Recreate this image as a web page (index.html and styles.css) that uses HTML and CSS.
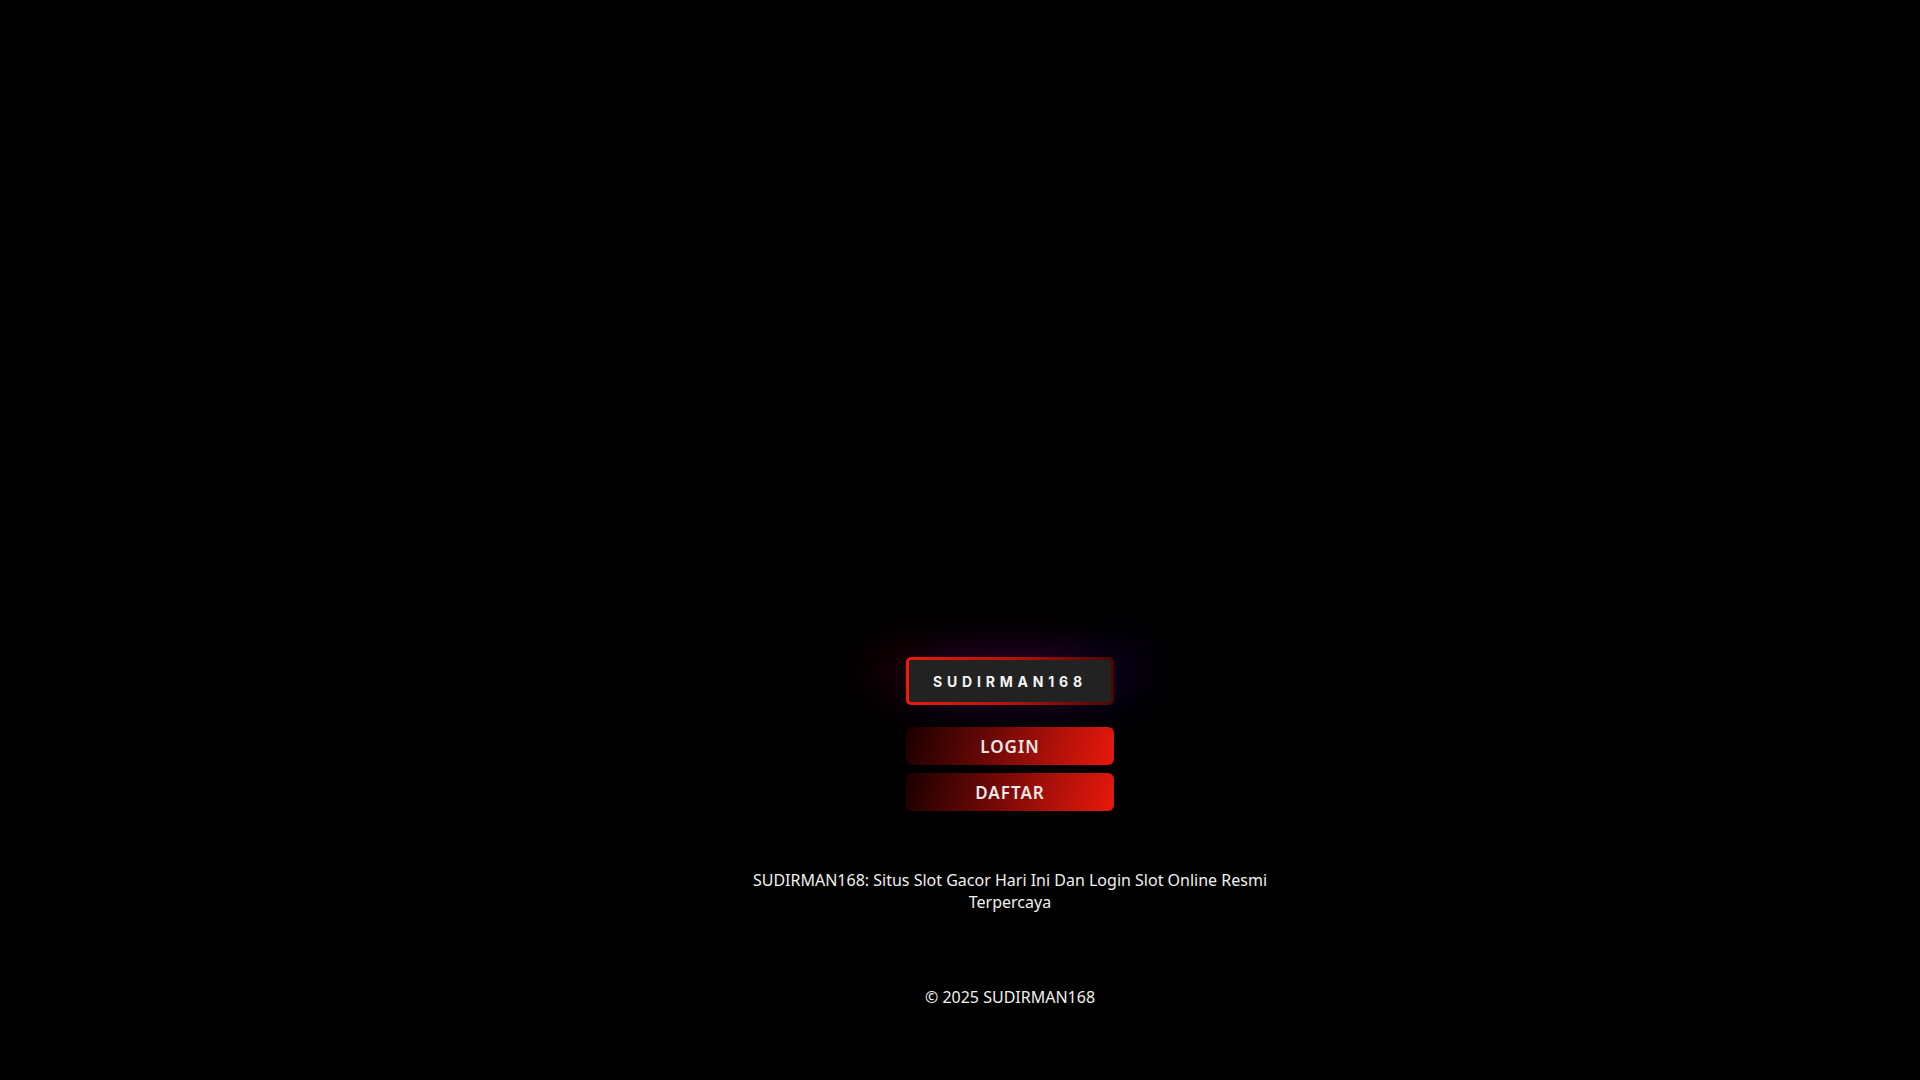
FILE: index.html
```html
<!DOCTYPE html>
<html lang="id">
<head>
<meta charset="utf-8">
<title>SUDIRMAN168</title>
<link rel="stylesheet" href="styles.css">
</head>
<body>
<main class="page">
  <section class="card">
    <div class="brand"><span class="brand-text">SUDIRMAN168</span></div>
    <div class="actions">
      <a class="btn" href="#">LOGIN</a>
      <a class="btn" href="#">DAFTAR</a>
    </div>
    <p class="desc">SUDIRMAN168: Situs Slot Gacor Hari Ini Dan Login Slot Online Resmi Terpercaya</p>
  </section>
  <footer class="footer">© 2025 SUDIRMAN168</footer>
</main>
</body>
</html>
```

FILE: styles.css
```css
html, body {
  margin: 0;
  padding: 0;
  background: #000;
  height: 100%;
}
body {
  font-family: "Noto Sans", "Open Sans", sans-serif;
  color: #f2f2f2;
}
.page {
  padding-left: 100px;
  padding-top: 657px;
  display: flex;
  flex-direction: column;
  align-items: center;
}
.card {
  display: flex;
  flex-direction: column;
  align-items: center;
  width: 560px;
}
.brand {
  box-sizing: border-box;
  width: 208px;
  height: 48px;
  padding: 3px;
  border-radius: 5px;
  background: linear-gradient(90deg, #ee1a0e 0%, #b01208 55%, #4a0604 100%);
  box-shadow: -30px -10px 45px rgba(150, 0, 40, 0.2), 30px -10px 45px rgba(60, 0, 160, 0.2), 0 12px 45px rgba(60, 0, 120, 0.16);
  display: flex;
}
.brand-text {
  flex: 1;
  background: #222;
  border-radius: 2px;
  display: flex;
  align-items: center;
  justify-content: center;
  font-family: Inter, "Noto Sans", sans-serif;
  font-weight: 700;
  font-size: 14px;
  letter-spacing: 4.8px;
  color: #f4f4f4;
}
.actions {
  margin-top: 22px;
  display: flex;
  flex-direction: column;
  gap: 8px;
}
.btn {
  width: 208px;
  height: 38px;
  border-radius: 6px;
  background: linear-gradient(105deg, #1a0000 0%, #6a0806 40%, #b8120a 75%, #e8180c 100%);
  display: flex;
  align-items: center;
  justify-content: center;
  text-decoration: none;
  color: #efe6e6;
  font-weight: 600;
  font-size: 17px;
  letter-spacing: 1px;
}
.desc {
  margin: 58px 0 0;
  text-align: center;
  font-size: 16px;
  line-height: 22px;
  width: 540px;
  color: #f0f0f0;
}
.footer {
  margin-top: 73px;
  font-size: 16px;
  line-height: 22px;
  color: #f0f0f0;
}
```
